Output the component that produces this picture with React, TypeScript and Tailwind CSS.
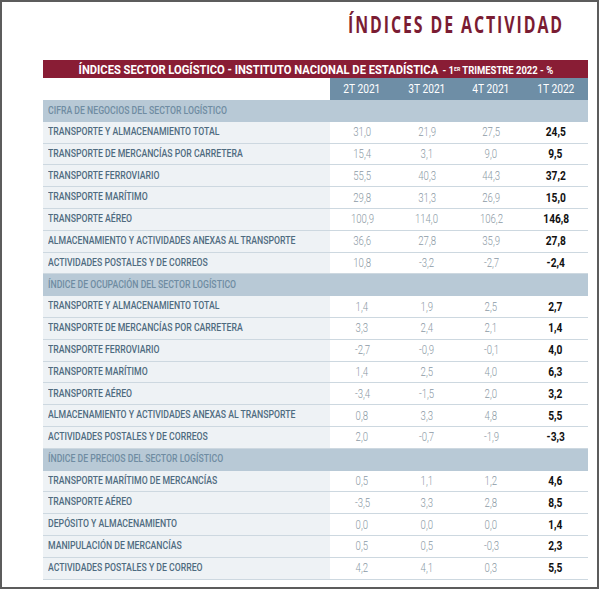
import React from 'react'

type Row = { label: string; values: string[]; last: string }
type Section = { title: string; rows: Row[] }

const sections: Section[] = [
  {
    title: 'CIFRA DE NEGOCIOS DEL SECTOR LOGÍSTICO',
    rows: [
      { label: 'TRANSPORTE Y ALMACENAMIENTO TOTAL', values: ['31,0', '21,9', '27,5'], last: '24,5' },
      { label: 'TRANSPORTE DE MERCANCÍAS POR CARRETERA', values: ['15,4', '3,1', '9,0'], last: '9,5' },
      { label: 'TRANSPORTE FERROVIARIO', values: ['55,5', '40,3', '44,3'], last: '37,2' },
      { label: 'TRANSPORTE MARÍTIMO', values: ['29,8', '31,3', '26,9'], last: '15,0' },
      { label: 'TRANSPORTE AÉREO', values: ['100,9', '114,0', '106,2'], last: '146,8' },
      { label: 'ALMACENAMIENTO Y ACTIVIDADES ANEXAS AL TRANSPORTE', values: ['36,6', '27,8', '35,9'], last: '27,8' },
      { label: 'ACTIVIDADES POSTALES Y DE CORREOS', values: ['10,8', '-3,2', '-2,7'], last: '-2,4' },
    ],
  },
  {
    title: 'ÍNDICE DE OCUPACIÓN DEL SECTOR LOGÍSTICO',
    rows: [
      { label: 'TRANSPORTE Y ALMACENAMIENTO TOTAL', values: ['1,4', '1,9', '2,5'], last: '2,7' },
      { label: 'TRANSPORTE DE MERCANCÍAS POR CARRETERA', values: ['3,3', '2,4', '2,1'], last: '1,4' },
      { label: 'TRANSPORTE FERROVIARIO', values: ['-2,7', '-0,9', '-0,1'], last: '4,0' },
      { label: 'TRANSPORTE MARÍTIMO', values: ['1,4', '2,5', '4,0'], last: '6,3' },
      { label: 'TRANSPORTE AÉREO', values: ['-3,4', '-1,5', '2,0'], last: '3,2' },
      { label: 'ALMACENAMIENTO Y ACTIVIDADES ANEXAS AL TRANSPORTE', values: ['0,8', '3,3', '4,8'], last: '5,5' },
      { label: 'ACTIVIDADES POSTALES Y DE CORREOS', values: ['2,0', '-0,7', '-1,9'], last: '-3,3' },
    ],
  },
  {
    title: 'ÍNDICE DE PRECIOS DEL SECTOR LOGÍSTICO',
    rows: [
      { label: 'TRANSPORTE MARÍTIMO DE MERCANCÍAS', values: ['0,5', '1,1', '1,2'], last: '4,6' },
      { label: 'TRANSPORTE AÉREO', values: ['-3,5', '3,3', '2,8'], last: '8,5' },
      { label: 'DEPÓSITO Y ALMACENAMIENTO', values: ['0,0', '0,0', '0,0'], last: '1,4' },
      { label: 'MANIPULACIÓN DE MERCANCÍAS', values: ['0,5', '0,5', '-0,3'], last: '2,3' },
      { label: 'ACTIVIDADES POSTALES Y DE CORREO', values: ['4,2', '4,1', '0,3'], last: '5,5' },
    ],
  },
]

const columns = ['2T 2021', '3T 2021', '4T 2021', '1T 2022']

// no condensed face installed, so Roboto is squeezed horizontally
const font = "font-['Roboto',sans-serif]"

function DataRow({ row }: { row: Row }) {
  return (
    <div className="flex h-[21.8px] border-b border-[#cdd8e0]">
      <div className="flex w-[287px] items-center bg-[#eef2f5] pl-[5px]">
        <span className={`inline-block origin-left scale-x-[0.79] whitespace-nowrap text-[11px] font-medium text-[#4e6b80] ${font}`}>
          {row.label}
        </span>
      </div>
      {row.values.map((v, i) => (
        <div key={i} className="flex flex-1 items-center justify-center">
          <span className={`inline-block scale-x-[0.8] text-[12px] font-light text-[#8c9aa5] ${font}`}>{v}</span>
        </div>
      ))}
      <div className="flex flex-1 items-center justify-center">
        <span className={`inline-block scale-x-[0.85] text-[12px] font-bold text-[#111] ${font}`}>{row.last}</span>
      </div>
    </div>
  )
}

export default function App() {
  return (
    <div className="h-[589px] w-[599px] border-2 border-[#5c5c5c] bg-white">
      {/* Title */}
      <div className="flex justify-end pr-[33px] pt-[7px]">
        <h1 className="inline-block origin-right scale-x-[0.69] whitespace-nowrap font-['Open_Sans',sans-serif] text-[23px] font-bold leading-[30px] tracking-[2.8px] text-[#7a1c33]">
          ÍNDICES DE ACTIVIDAD
        </h1>
      </div>

      <div className="ml-[41px] mt-[21px] w-[545px]">
        {/* Red header */}
        <div className="flex h-[18px] items-center justify-center overflow-hidden bg-[#891d35]">
          <span className={`inline-block scale-x-[0.86] whitespace-nowrap text-white ${font}`}>
            <span className="text-[13px] font-bold">ÍNDICES SECTOR LOGÍSTICO - INSTITUTO NACIONAL DE ESTADÍSTICA</span>
            <span className="ml-[5px] text-[11px] font-bold">
              - 1<sup className="text-[6px]">ER</sup> TRIMESTRE 2022 - %
            </span>
          </span>
        </div>

        {/* Column headers */}
        <div className="flex h-[22px]">
          <div className="w-[287px] bg-white" />
          <div className="flex flex-1 bg-[#6e8ea6]">
            {columns.map((c) => (
              <div key={c} className="flex flex-1 items-center justify-center">
                <span className={`inline-block scale-x-[0.85] whitespace-nowrap text-[12px] text-white ${font}`}>{c}</span>
              </div>
            ))}
          </div>
        </div>

        {sections.map((s) => (
          <div key={s.title}>
            <div className="flex h-[21.8px] items-center bg-[#b8c9d6] pl-[5px]">
              <span className={`inline-block origin-left scale-x-[0.79] whitespace-nowrap text-[11px] font-medium text-[#6f8ca2] ${font}`}>
                {s.title}
              </span>
            </div>
            {s.rows.map((r, i) => (
              <DataRow key={i} row={r} />
            ))}
          </div>
        ))}
      </div>
    </div>
  )
}
